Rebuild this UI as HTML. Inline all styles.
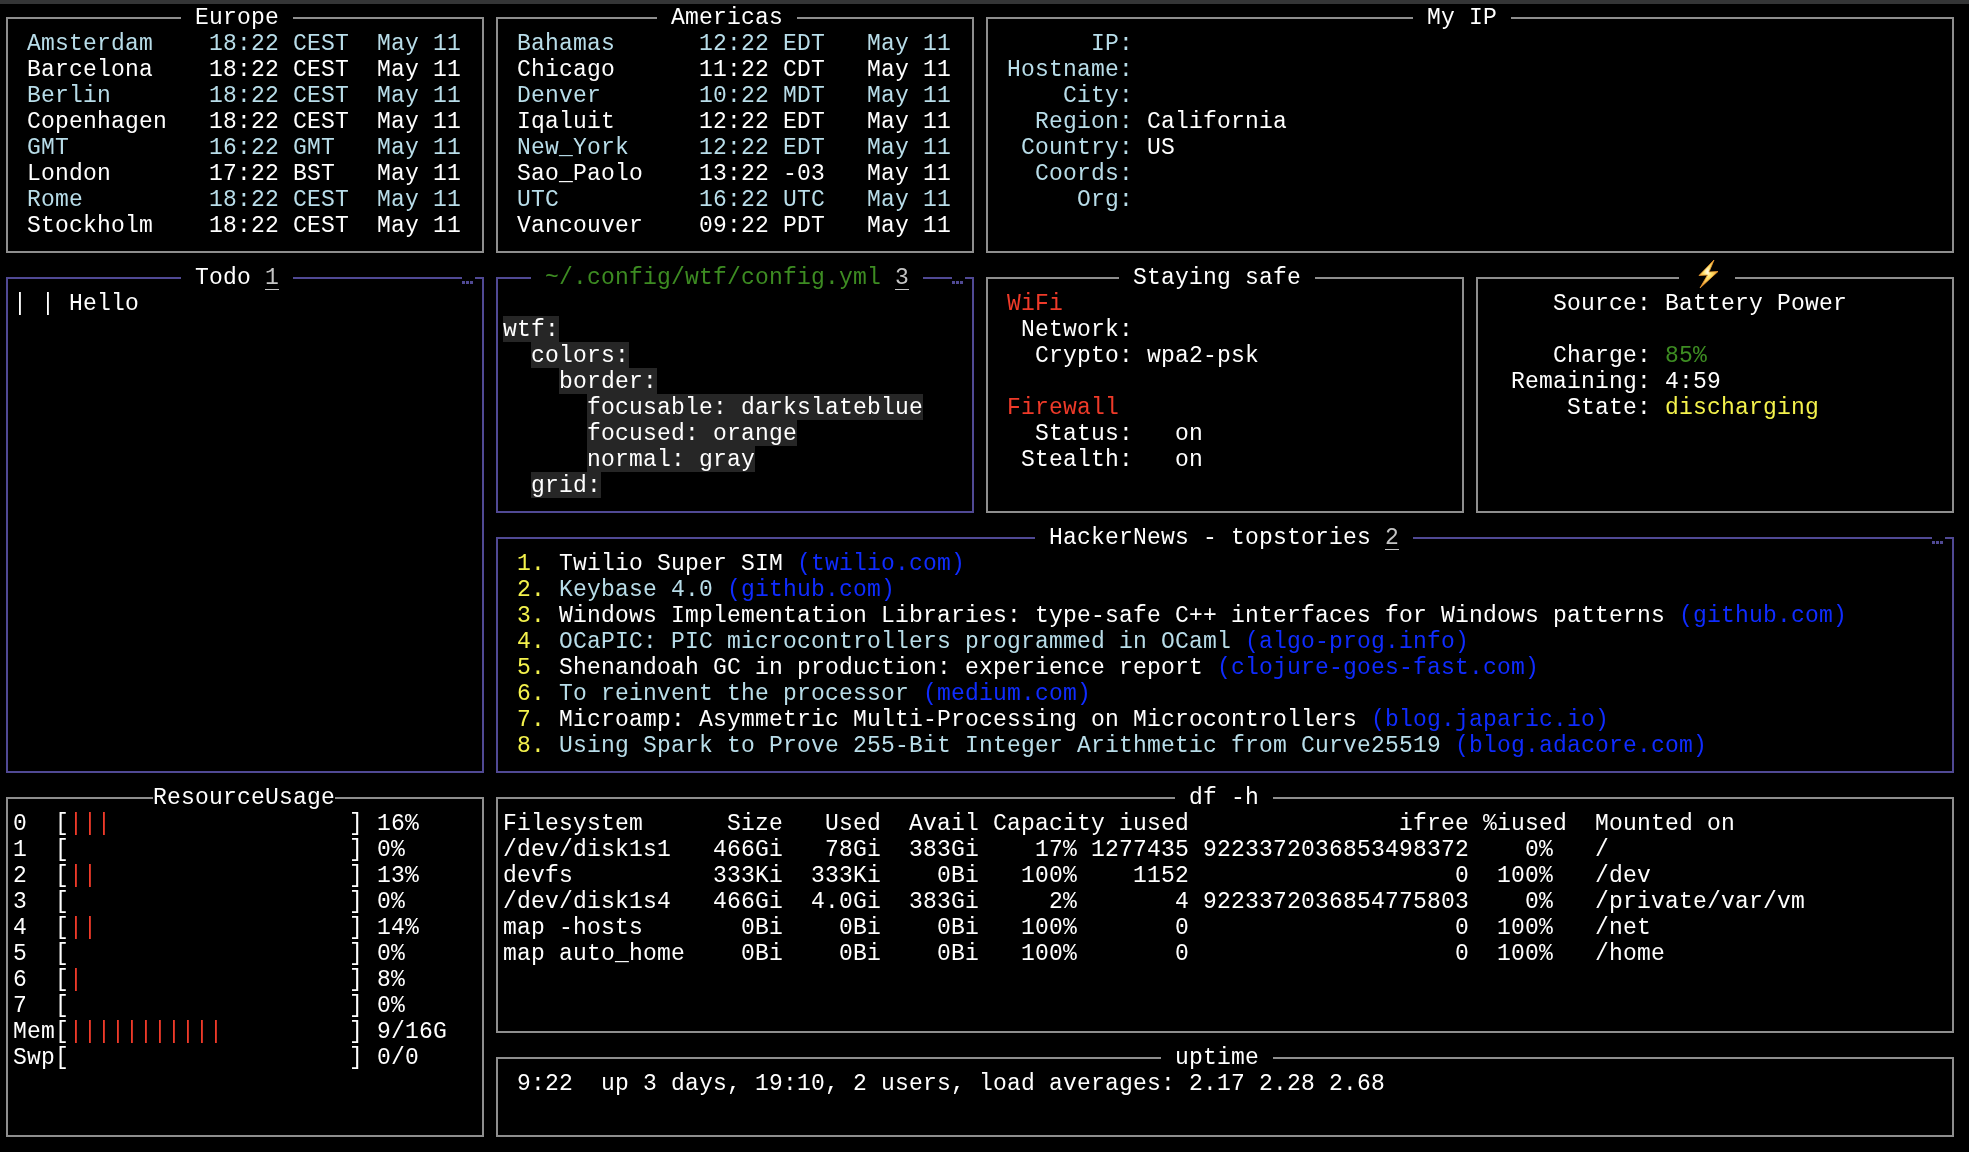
<!DOCTYPE html>
<html><head><meta charset="utf-8"><style>html,body{margin:0;padding:0;background:#000;}
body{width:1969px;height:1152px;overflow:hidden;position:relative;}
.top{position:absolute;left:0;top:0;width:1969px;height:4px;background:#343536;}
.b{position:absolute;}
.t{position:absolute;white-space:pre;font-family:"Liberation Mono",monospace;font-size:23.0px;line-height:26px;height:26px;letter-spacing:0.1978px;}
.u{text-decoration:underline;text-decoration-thickness:1px;text-underline-offset:5px;}
.bolt{position:absolute;}
#L{position:absolute;left:0;top:0;width:1969px;height:1152px;will-change:transform;}
</style></head>
<body><div class="top"></div><div id="L">
<div class="b" style="left:6px;top:17px;width:175px;height:2px;background:#8e8e8e"></div>
<div class="b" style="left:293px;top:17px;width:191px;height:2px;background:#8e8e8e"></div>
<div class="b" style="left:6px;top:251px;width:478px;height:2px;background:#8e8e8e"></div>
<div class="b" style="left:6px;top:17px;width:2px;height:236px;background:#8e8e8e"></div>
<div class="b" style="left:482px;top:17px;width:2px;height:236px;background:#8e8e8e"></div>
<div class="t" style="left:195px;top:4.7px;color:#ffffff">Europe</div>
<div class="t" style="left:27px;top:30.7px;color:#b8dde9">Amsterdam</div>
<div class="t" style="left:209px;top:30.7px;color:#b8dde9">18:22 CEST</div>
<div class="t" style="left:377px;top:30.7px;color:#b8dde9">May 11</div>
<div class="t" style="left:27px;top:56.7px;color:#ffffff">Barcelona</div>
<div class="t" style="left:209px;top:56.7px;color:#ffffff">18:22 CEST</div>
<div class="t" style="left:377px;top:56.7px;color:#ffffff">May 11</div>
<div class="t" style="left:27px;top:82.7px;color:#b8dde9">Berlin</div>
<div class="t" style="left:209px;top:82.7px;color:#b8dde9">18:22 CEST</div>
<div class="t" style="left:377px;top:82.7px;color:#b8dde9">May 11</div>
<div class="t" style="left:27px;top:108.7px;color:#ffffff">Copenhagen</div>
<div class="t" style="left:209px;top:108.7px;color:#ffffff">18:22 CEST</div>
<div class="t" style="left:377px;top:108.7px;color:#ffffff">May 11</div>
<div class="t" style="left:27px;top:134.7px;color:#b8dde9">GMT</div>
<div class="t" style="left:209px;top:134.7px;color:#b8dde9">16:22 GMT</div>
<div class="t" style="left:377px;top:134.7px;color:#b8dde9">May 11</div>
<div class="t" style="left:27px;top:160.7px;color:#ffffff">London</div>
<div class="t" style="left:209px;top:160.7px;color:#ffffff">17:22 BST</div>
<div class="t" style="left:377px;top:160.7px;color:#ffffff">May 11</div>
<div class="t" style="left:27px;top:186.7px;color:#b8dde9">Rome</div>
<div class="t" style="left:209px;top:186.7px;color:#b8dde9">18:22 CEST</div>
<div class="t" style="left:377px;top:186.7px;color:#b8dde9">May 11</div>
<div class="t" style="left:27px;top:212.7px;color:#ffffff">Stockholm</div>
<div class="t" style="left:209px;top:212.7px;color:#ffffff">18:22 CEST</div>
<div class="t" style="left:377px;top:212.7px;color:#ffffff">May 11</div>
<div class="b" style="left:496px;top:17px;width:161px;height:2px;background:#8e8e8e"></div>
<div class="b" style="left:797px;top:17px;width:177px;height:2px;background:#8e8e8e"></div>
<div class="b" style="left:496px;top:251px;width:478px;height:2px;background:#8e8e8e"></div>
<div class="b" style="left:496px;top:17px;width:2px;height:236px;background:#8e8e8e"></div>
<div class="b" style="left:972px;top:17px;width:2px;height:236px;background:#8e8e8e"></div>
<div class="t" style="left:671px;top:4.7px;color:#ffffff">Americas</div>
<div class="t" style="left:517px;top:30.7px;color:#b8dde9">Bahamas</div>
<div class="t" style="left:699px;top:30.7px;color:#b8dde9">12:22 EDT</div>
<div class="t" style="left:867px;top:30.7px;color:#b8dde9">May 11</div>
<div class="t" style="left:517px;top:56.7px;color:#ffffff">Chicago</div>
<div class="t" style="left:699px;top:56.7px;color:#ffffff">11:22 CDT</div>
<div class="t" style="left:867px;top:56.7px;color:#ffffff">May 11</div>
<div class="t" style="left:517px;top:82.7px;color:#b8dde9">Denver</div>
<div class="t" style="left:699px;top:82.7px;color:#b8dde9">10:22 MDT</div>
<div class="t" style="left:867px;top:82.7px;color:#b8dde9">May 11</div>
<div class="t" style="left:517px;top:108.7px;color:#ffffff">Iqaluit</div>
<div class="t" style="left:699px;top:108.7px;color:#ffffff">12:22 EDT</div>
<div class="t" style="left:867px;top:108.7px;color:#ffffff">May 11</div>
<div class="t" style="left:517px;top:134.7px;color:#b8dde9">New_York</div>
<div class="t" style="left:699px;top:134.7px;color:#b8dde9">12:22 EDT</div>
<div class="t" style="left:867px;top:134.7px;color:#b8dde9">May 11</div>
<div class="t" style="left:517px;top:160.7px;color:#ffffff">Sao_Paolo</div>
<div class="t" style="left:699px;top:160.7px;color:#ffffff">13:22 -03</div>
<div class="t" style="left:867px;top:160.7px;color:#ffffff">May 11</div>
<div class="t" style="left:517px;top:186.7px;color:#b8dde9">UTC</div>
<div class="t" style="left:699px;top:186.7px;color:#b8dde9">16:22 UTC</div>
<div class="t" style="left:867px;top:186.7px;color:#b8dde9">May 11</div>
<div class="t" style="left:517px;top:212.7px;color:#ffffff">Vancouver</div>
<div class="t" style="left:699px;top:212.7px;color:#ffffff">09:22 PDT</div>
<div class="t" style="left:867px;top:212.7px;color:#ffffff">May 11</div>
<div class="b" style="left:986px;top:17px;width:427px;height:2px;background:#8e8e8e"></div>
<div class="b" style="left:1511px;top:17px;width:443px;height:2px;background:#8e8e8e"></div>
<div class="b" style="left:986px;top:251px;width:968px;height:2px;background:#8e8e8e"></div>
<div class="b" style="left:986px;top:17px;width:2px;height:236px;background:#8e8e8e"></div>
<div class="b" style="left:1952px;top:17px;width:2px;height:236px;background:#8e8e8e"></div>
<div class="t" style="left:1427px;top:4.7px;color:#ffffff">My IP</div>
<div class="t" style="left:1091px;top:30.7px;color:#b8dde9">IP:</div>
<div class="t" style="left:1007px;top:56.7px;color:#b8dde9">Hostname:</div>
<div class="t" style="left:1063px;top:82.7px;color:#b8dde9">City:</div>
<div class="t" style="left:1035px;top:108.7px;color:#b8dde9">Region:</div>
<div class="t" style="left:1147px;top:108.7px;color:#ffffff">California</div>
<div class="t" style="left:1021px;top:134.7px;color:#b8dde9">Country:</div>
<div class="t" style="left:1147px;top:134.7px;color:#ffffff">US</div>
<div class="t" style="left:1035px;top:160.7px;color:#b8dde9">Coords:</div>
<div class="t" style="left:1077px;top:186.7px;color:#b8dde9">Org:</div>
<div class="b" style="left:6px;top:277px;width:175px;height:2px;background:#504994"></div>
<div class="b" style="left:293px;top:277px;width:169px;height:2px;background:#504994"></div>
<div class="b" style="left:475px;top:277px;width:9px;height:2px;background:#504994"></div>
<div class="b" style="left:6px;top:771px;width:478px;height:2px;background:#504994"></div>
<div class="b" style="left:6px;top:277px;width:2px;height:496px;background:#504994"></div>
<div class="b" style="left:482px;top:277px;width:2px;height:496px;background:#504994"></div>
<div class="b" style="left:462px;top:281px;width:3px;height:3px;background:#504994"></div>
<div class="b" style="left:466px;top:281px;width:3px;height:3px;background:#504994"></div>
<div class="b" style="left:470px;top:281px;width:3px;height:3px;background:#504994"></div>
<div class="t" style="left:195px;top:264.7px;color:#ffffff">Todo </div>
<div class="t u" style="left:265px;top:264.7px;color:#c4c4c4">1</div>
<div class="t" style="left:13px;top:290.7px;color:#ffffff">| | Hello</div>
<div class="b" style="left:496px;top:277px;width:35px;height:2px;background:#504994"></div>
<div class="b" style="left:923px;top:277px;width:29px;height:2px;background:#504994"></div>
<div class="b" style="left:965px;top:277px;width:9px;height:2px;background:#504994"></div>
<div class="b" style="left:496px;top:511px;width:478px;height:2px;background:#504994"></div>
<div class="b" style="left:496px;top:277px;width:2px;height:236px;background:#504994"></div>
<div class="b" style="left:972px;top:277px;width:2px;height:236px;background:#504994"></div>
<div class="b" style="left:952px;top:281px;width:3px;height:3px;background:#504994"></div>
<div class="b" style="left:956px;top:281px;width:3px;height:3px;background:#504994"></div>
<div class="b" style="left:960px;top:281px;width:3px;height:3px;background:#504994"></div>
<div class="t" style="left:545px;top:264.7px;color:#3d8c22">~/.config/wtf/config.yml</div>
<div class="t u" style="left:895px;top:264.7px;color:#c4c4c4">3</div>
<div class="b" style="left:503px;top:316px;width:56px;height:26px;background:#262626"></div>
<div class="t" style="left:503px;top:316.7px;color:#ffffff">wtf:</div>
<div class="b" style="left:531px;top:342px;width:98px;height:26px;background:#262626"></div>
<div class="t" style="left:531px;top:342.7px;color:#ffffff">colors:</div>
<div class="b" style="left:559px;top:368px;width:98px;height:26px;background:#262626"></div>
<div class="t" style="left:559px;top:368.7px;color:#ffffff">border:</div>
<div class="b" style="left:587px;top:394px;width:336px;height:26px;background:#262626"></div>
<div class="t" style="left:587px;top:394.7px;color:#ffffff">focusable: darkslateblue</div>
<div class="b" style="left:587px;top:420px;width:210px;height:26px;background:#262626"></div>
<div class="t" style="left:587px;top:420.7px;color:#ffffff">focused: orange</div>
<div class="b" style="left:587px;top:446px;width:168px;height:26px;background:#262626"></div>
<div class="t" style="left:587px;top:446.7px;color:#ffffff">normal: gray</div>
<div class="b" style="left:531px;top:472px;width:70px;height:26px;background:#262626"></div>
<div class="t" style="left:531px;top:472.7px;color:#ffffff">grid:</div>
<div class="b" style="left:986px;top:277px;width:133px;height:2px;background:#8e8e8e"></div>
<div class="b" style="left:1315px;top:277px;width:149px;height:2px;background:#8e8e8e"></div>
<div class="b" style="left:986px;top:511px;width:478px;height:2px;background:#8e8e8e"></div>
<div class="b" style="left:986px;top:277px;width:2px;height:236px;background:#8e8e8e"></div>
<div class="b" style="left:1462px;top:277px;width:2px;height:236px;background:#8e8e8e"></div>
<div class="t" style="left:1133px;top:264.7px;color:#ffffff">Staying safe</div>
<div class="t" style="left:1007px;top:290.7px;color:#ef3a29">WiFi</div>
<div class="t" style="left:1021px;top:316.7px;color:#ffffff">Network:</div>
<div class="t" style="left:1035px;top:342.7px;color:#ffffff">Crypto: wpa2-psk</div>
<div class="t" style="left:1007px;top:394.7px;color:#ef3a29">Firewall</div>
<div class="t" style="left:1035px;top:420.7px;color:#ffffff">Status:   on</div>
<div class="t" style="left:1021px;top:446.7px;color:#ffffff">Stealth:   on</div>
<div class="b" style="left:1476px;top:277px;width:203px;height:2px;background:#8e8e8e"></div>
<div class="b" style="left:1735px;top:277px;width:219px;height:2px;background:#8e8e8e"></div>
<div class="b" style="left:1476px;top:511px;width:478px;height:2px;background:#8e8e8e"></div>
<div class="b" style="left:1476px;top:277px;width:2px;height:236px;background:#8e8e8e"></div>
<div class="b" style="left:1952px;top:277px;width:2px;height:236px;background:#8e8e8e"></div>
<div class="t" style="left:1553px;top:290.7px;color:#ffffff">Source: Battery Power</div>
<div class="t" style="left:1553px;top:342.7px;color:#ffffff">Charge: </div>
<div class="t" style="left:1665px;top:342.7px;color:#3d8c22">85%</div>
<div class="t" style="left:1511px;top:368.7px;color:#ffffff">Remaining: 4:59</div>
<div class="t" style="left:1567px;top:394.7px;color:#ffffff">State: </div>
<div class="t" style="left:1665px;top:394.7px;color:#f4f24c">discharging</div>
<svg class="bolt" width="40" height="40" viewBox="0 0 40 40" style="left:1690px;top:256px"><defs><radialGradient id="lg" cx="0.45" cy="0.42" r="0.6"><stop offset="0" stop-color="#fffbe8"/><stop offset="0.35" stop-color="#ffe46a"/><stop offset="1" stop-color="#f0922a"/></radialGradient></defs><polygon points="24,4 9,19.5 17.5,19 10,32 28,15.5 19,16" fill="url(#lg)" stroke="#ec9a30" stroke-width="0.8" stroke-linejoin="miter"/></svg>
<div class="b" style="left:496px;top:537px;width:539px;height:2px;background:#504994"></div>
<div class="b" style="left:1413px;top:537px;width:519px;height:2px;background:#504994"></div>
<div class="b" style="left:1945px;top:537px;width:9px;height:2px;background:#504994"></div>
<div class="b" style="left:496px;top:771px;width:1458px;height:2px;background:#504994"></div>
<div class="b" style="left:496px;top:537px;width:2px;height:236px;background:#504994"></div>
<div class="b" style="left:1952px;top:537px;width:2px;height:236px;background:#504994"></div>
<div class="b" style="left:1932px;top:541px;width:3px;height:3px;background:#504994"></div>
<div class="b" style="left:1936px;top:541px;width:3px;height:3px;background:#504994"></div>
<div class="b" style="left:1940px;top:541px;width:3px;height:3px;background:#504994"></div>
<div class="t" style="left:1049px;top:524.7px;color:#ffffff">HackerNews - topstories </div>
<div class="t u" style="left:1385px;top:524.7px;color:#c4c4c4">2</div>
<div class="t" style="left:517px;top:550.7px;color:#f4f24c">1.</div>
<div class="t" style="left:559px;top:550.7px;color:#ffffff">Twilio Super SIM</div>
<div class="t" style="left:797px;top:550.7px;color:#0f2cff">(twilio.com)</div>
<div class="t" style="left:517px;top:576.7px;color:#f4f24c">2.</div>
<div class="t" style="left:559px;top:576.7px;color:#b8dde9">Keybase 4.0</div>
<div class="t" style="left:727px;top:576.7px;color:#0f2cff">(github.com)</div>
<div class="t" style="left:517px;top:602.7px;color:#f4f24c">3.</div>
<div class="t" style="left:559px;top:602.7px;color:#ffffff">Windows Implementation Libraries: type-safe C++ interfaces for Windows patterns</div>
<div class="t" style="left:1679px;top:602.7px;color:#0f2cff">(github.com)</div>
<div class="t" style="left:517px;top:628.7px;color:#f4f24c">4.</div>
<div class="t" style="left:559px;top:628.7px;color:#b8dde9">OCaPIC: PIC microcontrollers programmed in OCaml</div>
<div class="t" style="left:1245px;top:628.7px;color:#0f2cff">(algo-prog.info)</div>
<div class="t" style="left:517px;top:654.7px;color:#f4f24c">5.</div>
<div class="t" style="left:559px;top:654.7px;color:#ffffff">Shenandoah GC in production: experience report</div>
<div class="t" style="left:1217px;top:654.7px;color:#0f2cff">(clojure-goes-fast.com)</div>
<div class="t" style="left:517px;top:680.7px;color:#f4f24c">6.</div>
<div class="t" style="left:559px;top:680.7px;color:#b8dde9">To reinvent the processor</div>
<div class="t" style="left:923px;top:680.7px;color:#0f2cff">(medium.com)</div>
<div class="t" style="left:517px;top:706.7px;color:#f4f24c">7.</div>
<div class="t" style="left:559px;top:706.7px;color:#ffffff">Microamp: Asymmetric Multi-Processing on Microcontrollers</div>
<div class="t" style="left:1371px;top:706.7px;color:#0f2cff">(blog.japaric.io)</div>
<div class="t" style="left:517px;top:732.7px;color:#f4f24c">8.</div>
<div class="t" style="left:559px;top:732.7px;color:#b8dde9">Using Spark to Prove 255-Bit Integer Arithmetic from Curve25519</div>
<div class="t" style="left:1455px;top:732.7px;color:#0f2cff">(blog.adacore.com)</div>
<div class="b" style="left:6px;top:797px;width:147px;height:2px;background:#8e8e8e"></div>
<div class="b" style="left:335px;top:797px;width:149px;height:2px;background:#8e8e8e"></div>
<div class="b" style="left:6px;top:1135px;width:478px;height:2px;background:#8e8e8e"></div>
<div class="b" style="left:6px;top:797px;width:2px;height:340px;background:#8e8e8e"></div>
<div class="b" style="left:482px;top:797px;width:2px;height:340px;background:#8e8e8e"></div>
<div class="t" style="left:153px;top:784.7px;color:#ffffff">ResourceUsage</div>
<div class="t" style="left:13px;top:810.7px;color:#ffffff">0</div>
<div class="t" style="left:55px;top:810.7px;color:#ffffff">[</div>
<div class="t" style="left:69px;top:810.7px;color:#ef3a29">|||</div>
<div class="t" style="left:349px;top:810.7px;color:#ffffff">]</div>
<div class="t" style="left:377px;top:810.7px;color:#ffffff">16%</div>
<div class="t" style="left:13px;top:836.7px;color:#ffffff">1</div>
<div class="t" style="left:55px;top:836.7px;color:#ffffff">[</div>
<div class="t" style="left:349px;top:836.7px;color:#ffffff">]</div>
<div class="t" style="left:377px;top:836.7px;color:#ffffff">0%</div>
<div class="t" style="left:13px;top:862.7px;color:#ffffff">2</div>
<div class="t" style="left:55px;top:862.7px;color:#ffffff">[</div>
<div class="t" style="left:69px;top:862.7px;color:#ef3a29">||</div>
<div class="t" style="left:349px;top:862.7px;color:#ffffff">]</div>
<div class="t" style="left:377px;top:862.7px;color:#ffffff">13%</div>
<div class="t" style="left:13px;top:888.7px;color:#ffffff">3</div>
<div class="t" style="left:55px;top:888.7px;color:#ffffff">[</div>
<div class="t" style="left:349px;top:888.7px;color:#ffffff">]</div>
<div class="t" style="left:377px;top:888.7px;color:#ffffff">0%</div>
<div class="t" style="left:13px;top:914.7px;color:#ffffff">4</div>
<div class="t" style="left:55px;top:914.7px;color:#ffffff">[</div>
<div class="t" style="left:69px;top:914.7px;color:#ef3a29">||</div>
<div class="t" style="left:349px;top:914.7px;color:#ffffff">]</div>
<div class="t" style="left:377px;top:914.7px;color:#ffffff">14%</div>
<div class="t" style="left:13px;top:940.7px;color:#ffffff">5</div>
<div class="t" style="left:55px;top:940.7px;color:#ffffff">[</div>
<div class="t" style="left:349px;top:940.7px;color:#ffffff">]</div>
<div class="t" style="left:377px;top:940.7px;color:#ffffff">0%</div>
<div class="t" style="left:13px;top:966.7px;color:#ffffff">6</div>
<div class="t" style="left:55px;top:966.7px;color:#ffffff">[</div>
<div class="t" style="left:69px;top:966.7px;color:#ef3a29">|</div>
<div class="t" style="left:349px;top:966.7px;color:#ffffff">]</div>
<div class="t" style="left:377px;top:966.7px;color:#ffffff">8%</div>
<div class="t" style="left:13px;top:992.7px;color:#ffffff">7</div>
<div class="t" style="left:55px;top:992.7px;color:#ffffff">[</div>
<div class="t" style="left:349px;top:992.7px;color:#ffffff">]</div>
<div class="t" style="left:377px;top:992.7px;color:#ffffff">0%</div>
<div class="t" style="left:13px;top:1018.7px;color:#ffffff">Mem[</div>
<div class="t" style="left:69px;top:1018.7px;color:#ef3a29">|||||||||||</div>
<div class="t" style="left:349px;top:1018.7px;color:#ffffff">]</div>
<div class="t" style="left:377px;top:1018.7px;color:#ffffff">9/16G</div>
<div class="t" style="left:13px;top:1044.7px;color:#ffffff">Swp[</div>
<div class="t" style="left:349px;top:1044.7px;color:#ffffff">]</div>
<div class="t" style="left:377px;top:1044.7px;color:#ffffff">0/0</div>
<div class="b" style="left:496px;top:797px;width:679px;height:2px;background:#8e8e8e"></div>
<div class="b" style="left:1273px;top:797px;width:681px;height:2px;background:#8e8e8e"></div>
<div class="b" style="left:496px;top:1031px;width:1458px;height:2px;background:#8e8e8e"></div>
<div class="b" style="left:496px;top:797px;width:2px;height:236px;background:#8e8e8e"></div>
<div class="b" style="left:1952px;top:797px;width:2px;height:236px;background:#8e8e8e"></div>
<div class="t" style="left:1189px;top:784.7px;color:#ffffff">df -h</div>
<div class="t" style="left:503px;top:810.7px;color:#ffffff">Filesystem      Size   Used  Avail Capacity iused               ifree %iused  Mounted on</div>
<div class="t" style="left:503px;top:836.7px;color:#ffffff">/dev/disk1s1   466Gi   78Gi  383Gi    17% 1277435 9223372036853498372    0%   /</div>
<div class="t" style="left:503px;top:862.7px;color:#ffffff">devfs          333Ki  333Ki    0Bi   100%    1152                   0  100%   /dev</div>
<div class="t" style="left:503px;top:888.7px;color:#ffffff">/dev/disk1s4   466Gi  4.0Gi  383Gi     2%       4 9223372036854775803    0%   /private/var/vm</div>
<div class="t" style="left:503px;top:914.7px;color:#ffffff">map -hosts       0Bi    0Bi    0Bi   100%       0                   0  100%   /net</div>
<div class="t" style="left:503px;top:940.7px;color:#ffffff">map auto_home    0Bi    0Bi    0Bi   100%       0                   0  100%   /home</div>
<div class="b" style="left:496px;top:1057px;width:665px;height:2px;background:#8e8e8e"></div>
<div class="b" style="left:1273px;top:1057px;width:681px;height:2px;background:#8e8e8e"></div>
<div class="b" style="left:496px;top:1135px;width:1458px;height:2px;background:#8e8e8e"></div>
<div class="b" style="left:496px;top:1057px;width:2px;height:80px;background:#8e8e8e"></div>
<div class="b" style="left:1952px;top:1057px;width:2px;height:80px;background:#8e8e8e"></div>
<div class="t" style="left:1175px;top:1044.7px;color:#ffffff">uptime</div>
<div class="t" style="left:517px;top:1070.7px;color:#ffffff">9:22  up 3 days, 19:10, 2 users, load averages: 2.17 2.28 2.68</div>
</div></body></html>
